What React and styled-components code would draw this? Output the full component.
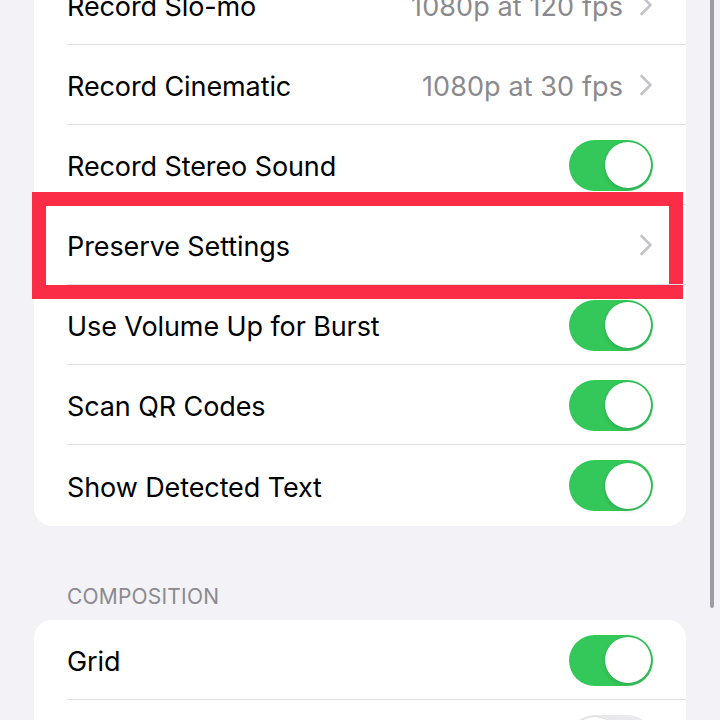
import React from 'react';
import styled, { createGlobalStyle } from 'styled-components';

const GlobalStyle = createGlobalStyle`
  html, body {
    margin: 0;
    padding: 0;
    background: #f2f2f7;
    overflow: hidden;
  }
  body {
    font-family: Inter, "Liberation Sans", sans-serif;
    -webkit-font-smoothing: antialiased;
  }
`

const Screen = styled.div`
  position: relative;
  width: 720px;
  height: 720px;
  overflow: hidden;
  background: #f2f2f7;
`

const Page = styled.div`
  display: flex;
  flex-direction: column;
  padding: 0 34px;
  margin-top: -35px;
`

const Card = styled.div`
  background: #fff;
  border-radius: 18px;
  display: flex;
  flex-direction: column;
`

const Row = styled.div`
  position: relative;
  height: ${p => p.h || 80}px;
  display: flex;
  align-items: center;
  padding: 0 33px;
  box-sizing: border-box;
  &:not(:last-child)::after {
    content: "";
    position: absolute;
    left: 33px;
    right: 0;
    bottom: 0;
    height: 1px;
    background: #dedee2;
  }
`

const Label = styled.span`
  flex: 1;
  font-size: 27px;
  color: #000;
  letter-spacing: -0.1px;
  padding-top: 3px;
`

const Value = styled.span`
  font-size: 27px;
  color: #8a8a8e;
  letter-spacing: 0.1px;
  margin-right: 16px;
  padding-top: 3px;
`

const Track = styled.div`
  position: relative;
  width: 84px;
  height: 51px;
  border-radius: 26px;
  background: ${p => (p.on ? '#34c759' : '#e9e9eb')};
  flex: none;
`

const Knob = styled.div`
  position: absolute;
  top: 2.5px;
  left: ${p => (p.on ? '35.5px' : '2.5px')};
  width: 46px;
  height: 46px;
  border-radius: 50%;
  background: #fff;
  box-shadow: 0 0 0 0.5px rgba(0, 0, 0, 0.06), 0 2px 4px rgba(0, 0, 0, 0.12);
`

const SectionHeader = styled.div`
  margin-top: 58px;
  margin-bottom: 11px;
  padding-left: 33px;
  font-size: 21px;
  color: #8a8a8e;
  letter-spacing: 0.2px;
  text-transform: uppercase;
`

const Highlight = styled.div`
  position: absolute;
  left: -2px;
  right: 3px;
  top: -13px;
  bottom: -14px;
  border: 14px solid #fb2c46;
  pointer-events: none;
`

const ScrollBar = styled.div`
  position: absolute;
  right: 6px;
  top: -20px;
  width: 4px;
  height: 628px;
  border-radius: 2px;
  background: #9c9ca2;
`

const Chevron = () => (
  <svg width="14" height="22" viewBox="0 0 14 22" style={{ flex: 'none' }}>
    <path d="M2.5 2 L11.5 11 L2.5 20" fill="none" stroke="#c4c4c8" strokeWidth="2.6" strokeLinecap="round" strokeLinejoin="round" />
  </svg>
)

const Toggle = ({ on }) => (
  <Track on={on}>
    <Knob on={on} />
  </Track>
)

const cameraRows = [
  { label: 'Record Slo-mo', value: '1080p at 120 fps' },
  { label: 'Record Cinematic', value: '1080p at 30 fps' },
  { label: 'Record Stereo Sound', toggle: true },
  { label: 'Preserve Settings', link: true, marked: true },
  { label: 'Use Volume Up for Burst', toggle: true },
  { label: 'Scan QR Codes', toggle: true },
  { label: 'Show Detected Text', toggle: true, h: 81 },
]

export default function App() {
  return (
    <Screen>
      <GlobalStyle />
      <Page>
        <Card>
          {cameraRows.map(r => (
            <Row key={r.label} h={r.h}>
              <Label>{r.label}</Label>
              {r.value && <Value>{r.value}</Value>}
              {r.toggle ? <Toggle on /> : <Chevron />}
              {r.marked && <Highlight />}
            </Row>
          ))}
        </Card>
        <SectionHeader>Composition</SectionHeader>
        <Card>
          <Row>
            <Label>Grid</Label>
            <Toggle on />
          </Row>
          <Row>
            <Label>Level</Label>
            <Toggle />
          </Row>
        </Card>
      </Page>
      <ScrollBar />
    </Screen>
  )
}
